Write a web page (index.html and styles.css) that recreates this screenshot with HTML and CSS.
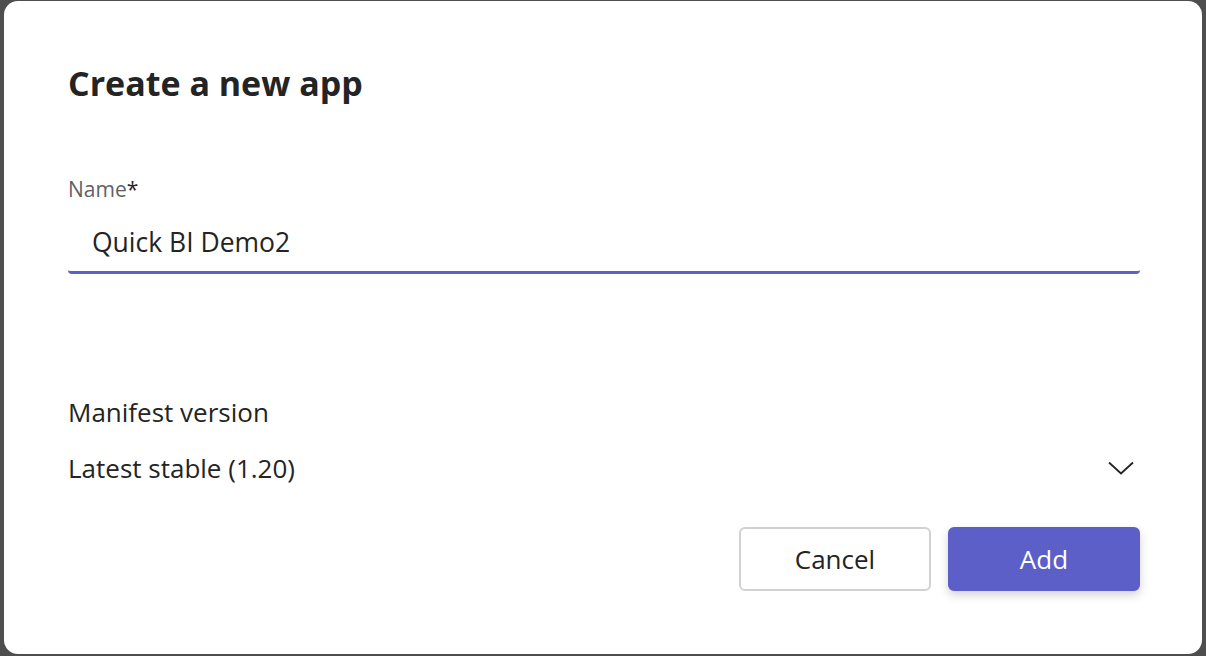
FILE: index.html
```html
<!DOCTYPE html>
<html lang="en">
<head>
    <meta charset="UTF-8">
    <meta name="viewport" content="width=device-width, initial-scale=1.0">
    <title>Create a new app</title>
    <link rel="stylesheet" href="styles.css">
</head>
<body>
    <div class="dialog">
        <h1 class="title">Create a new app</h1>

        <div class="field">
            <label class="label">Name<span class="req">*</span></label>
            <div class="input">Quick BI Demo2</div>
        </div>

        <div class="field manifest">
            <div class="field-title">Manifest version</div>
            <div class="select">
                <span>Latest stable (1.20)</span>
                <svg class="chevron" width="26" height="14" viewBox="0 0 26 14">
                    <path d="M1 1.5 L13 12.5 L25 1.5" fill="none" stroke="#242424" stroke-width="1.8"/>
                </svg>
            </div>
        </div>

        <div class="actions">
            <button class="btn">Cancel</button>
            <button class="btn primary">Add</button>
        </div>
    </div>
</body>
</html>
```

FILE: styles.css
```css
html, body {
    height: 100%;
}
body {
    margin: 0;
    background: #4e4e4e;
    font-family: "Open Sans", "Noto Sans", sans-serif;
    color: #242424;
    padding: 1px 4px 2px 4px;
    box-sizing: border-box;
}
.dialog {
    background: #fff;
    border-radius: 14px;
    height: 100%;
    box-sizing: border-box;
    padding: 0 62px 0 64px;
    display: flex;
    flex-direction: column;
}
.title {
    margin: 58px 0 0 0;
    font-size: 34px;
    font-weight: 700;
    line-height: 48px;
    color: #242424;
}
.field {
    margin-top: 68px;
}
.label {
    display: block;
    font-size: 21px;
    line-height: 28px;
    color: #616161;
}
.req {
    color: #242424;
}
.input {
    margin-top: 14px;
    padding: 0 24px;
    height: 54px;
    line-height: 50px;
    font-size: 26.5px;
    border-bottom: 3px solid #5b5fc7;
    border-radius: 0 0 4px 4px;
}
.manifest {
    margin-top: 121px;
}
.field-title {
    font-size: 26px;
    line-height: 34px;
}
.select {
    margin-top: 22px;
    display: flex;
    align-items: center;
    justify-content: space-between;
    font-size: 26px;
    line-height: 34px;
}
.chevron {
    margin-right: 6px;
}
.actions {
    margin-top: 42px;
    display: flex;
    justify-content: flex-end;
    gap: 17px;
}
.btn {
    width: 192px;
    height: 64px;
    border-radius: 6px;
    border: 2px solid #d1d1d1;
    background: #fff;
    color: #242424;
    font-family: "Open Sans", "Noto Sans", sans-serif;
    font-size: 26px;
    cursor: pointer;
}
.btn.primary {
    border-color: #5b5fc7;
    background: #5b5fc7;
    color: #fff;
    box-shadow: 0 4px 10px rgba(0,0,0,0.18);
}
```
